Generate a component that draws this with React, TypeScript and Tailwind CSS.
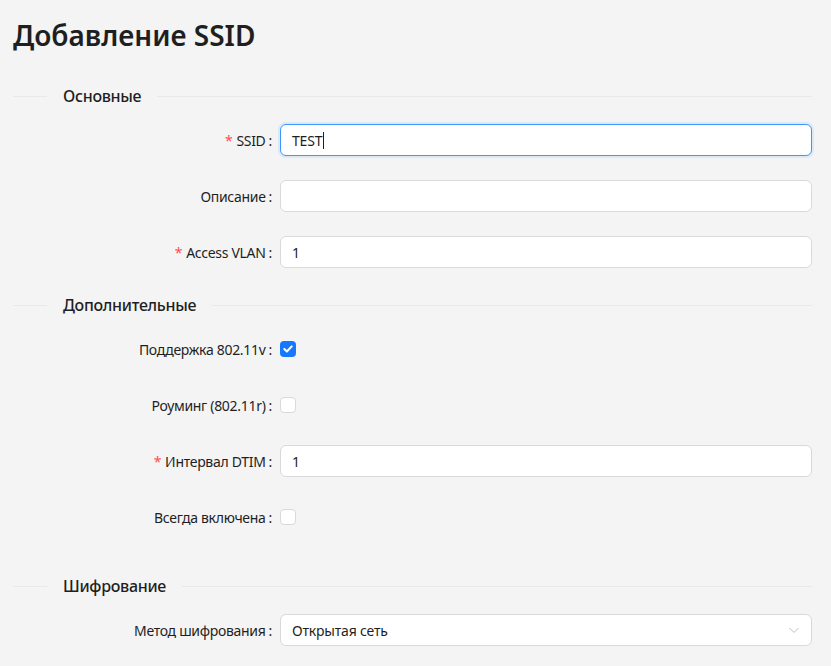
import React from 'react';

const font = { fontFamily: '"Noto Sans", "Open Sans", sans-serif' };

const Divider = ({ title, className = '' }: { title: string; className?: string }) => (
  <div className={`flex items-center h-[26px] mb-[15px] ${className}`}>
    <div className="w-[34px] h-px bg-[#e9e9e9]" />
    <span className="px-4 text-[16px] font-medium tracking-[-0.3px] text-[#1f1f1f] leading-[26px]">{title}</span>
    <div className="flex-1 h-px bg-[#e9e9e9]" />
  </div>
);

const Label = ({ text, required }: { text: string; required?: boolean }) => (
  <div className="w-[267px] shrink-0 flex justify-end items-center pr-2 text-[14px] tracking-[-0.3px] text-[#1f1f1f]">
    {required && <span className="text-[#ff4d4f] mr-1 text-[14px]">*</span>}
    <span>{text}</span>
    <span className="ml-[3px]">:</span>
  </div>
);

const Row = ({ children }: { children: React.ReactNode }) => (
  <div className="flex items-center h-8 mb-6">{children}</div>
);

const Input = ({ value, focused }: { value?: string; focused?: boolean }) => (
  <div
    className={`flex-1 h-8 rounded-[6px] bg-white border px-[11px] flex items-center text-[14px] tracking-[-0.2px] text-[#1f1f1f] ${
      focused ? 'border-[#4096ff] shadow-[0_0_0_2px_rgba(5,145,255,0.1)]' : 'border-[#d9d9d9]'
    }`}
  >
    <span>{value}</span>
    {focused && <span className="w-px h-[17px] bg-[#1f1f1f] ml-px" />}
  </div>
);

const Checkbox = ({ checked }: { checked?: boolean }) =>
  checked ? (
    <div className="w-4 h-4 rounded-[4px] bg-[#1677ff] flex items-center justify-center">
      <svg width="10" height="8" viewBox="0 0 10 8" fill="none">
        <path d="M1.3 4 L3.9 6.5 L8.7 1.4" stroke="white" strokeWidth="2" strokeLinecap="round" strokeLinejoin="round" />
      </svg>
    </div>
  ) : (
    <div className="w-4 h-4 rounded-[4px] bg-white border border-[#d9d9d9]" />
  );

export default function App() {
  return (
    <div className="min-h-[666px] bg-[#f4f4f4] pl-[13px] pr-[19px] pt-[15px]" style={font}>
      <h1 className="text-[28px] leading-[40px] font-semibold text-[#1f1f1f]">Добавление SSID</h1>

      <Divider title="Основные" className="mt-[28px]" />
      <Row>
        <Label text="SSID" required />
        <Input value="TEST" focused />
      </Row>
      <Row>
        <Label text="Описание" />
        <Input />
      </Row>
      <Row>
        <Label text="Access VLAN" required />
        <Input value="1" />
      </Row>

      <Divider title="Дополнительные" />
      <Row>
        <Label text="Поддержка 802.11v" />
        <Checkbox checked />
      </Row>
      <Row>
        <Label text="Роуминг (802.11r)" />
        <Checkbox />
      </Row>
      <Row>
        <Label text="Интервал DTIM" required />
        <Input value="1" />
      </Row>
      <Row>
        <Label text="Всегда включена" />
        <Checkbox />
      </Row>

      <Divider title="Шифрование" className="mt-10" />
      <Row>
        <Label text="Метод шифрования" />
        <div className="flex-1 h-8 rounded-[6px] bg-white border border-[#d9d9d9] pl-[11px] pr-[11px] flex items-center justify-between text-[14px] tracking-[-0.2px] text-[#1f1f1f]">
          <span>Открытая сеть</span>
          <svg width="12" height="12" viewBox="0 0 12 12" fill="none">
            <path d="M1.5 4 L6 8.5 L10.5 4" stroke="#bfbfbf" strokeWidth="1" />
          </svg>
        </div>
      </Row>
    </div>
  );
}
